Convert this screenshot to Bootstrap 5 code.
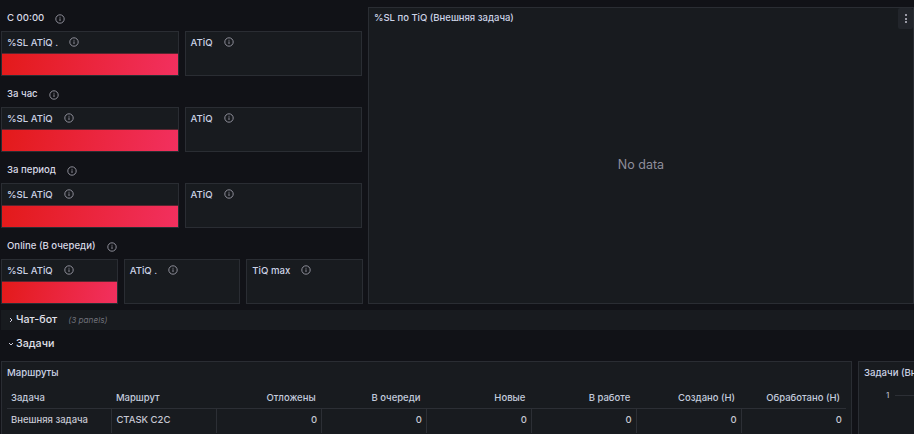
<!DOCTYPE html>
<html lang="ru"><head><meta charset="utf-8"><title>Dashboard</title>
<link href="https://cdn.jsdelivr.net/npm/bootstrap@5.3.0/dist/css/bootstrap.min.css" rel="stylesheet">
<style>
html,body{height:434px;overflow:hidden;background:#111217}
body{font-family:Inter,"Liberation Sans",sans-serif;font-size:9.6px;color:#ccccdc;font-weight:500;width:914px}
.dash{padding:7px 0 0 1px;width:930px}
.top-area{display:flex;gap:5px;height:297px}
.left-col{width:362px;flex:none}
.grp-title{height:24px;padding:3.5px 0 0 6px;color:#d8d9e6;line-height:14px;display:flex;gap:11px}
.tile-row{display:flex;gap:6px;height:45px;margin-bottom:7px;width:361px}
.tile-row.three{width:362px}
.tile{flex:1 1 0;min-width:0;background:#181b1f;border:1px solid #2a2d33;display:flex;flex-direction:column;position:relative}
.tile-head{height:21px;padding:0 5px 1px;line-height:17px;color:#ccd3e6;display:flex;gap:11px;align-items:center;flex:none}
.tile-head svg,.grp-title svg{flex:none}
.bar{flex:1;background:linear-gradient(100deg,#e31a1a,#f2305f);border-top:1px solid #5a2530}
.wide{background:#181b1f;border:1px solid #2a2d33;position:relative;display:flex;align-items:center;justify-content:center;width:546px;flex:none;padding-top:20px}
.wide-head{position:absolute;left:5px;top:3px;line-height:13px;color:#ccd3e6;font-size:9.5px}
.nodata{font-size:12.5px;font-weight:400;color:#8e8e9c}
.kebab{position:absolute;right:0;top:0;width:15px;height:21px;background:#22252b;border-radius:2px;display:flex;flex-direction:column;align-items:center;justify-content:center;gap:1.5px}
.kebab i{display:block;width:2px;height:2px;background:#9a9aa5}
.band{height:20px;margin-top:6px;background:#181b1f;display:flex;align-items:center;padding-left:7px;gap:2px;font-size:10.7px;color:#e0e1ea;width:913px}
.band2{background:none;height:20px;margin-top:4px}
.muted-note{font-size:8.2px;font-style:italic;color:#6e7079;margin-left:9px;font-weight:400}
.bottom{display:flex;gap:6px;margin-top:7px}
.routes{width:851px;height:80px;flex:none;background:#181b1f;border:1px solid #2a2d33;padding:3px 5px 0;overflow:hidden}
.routes-title,.tasks-title{line-height:15px;color:#ccd3e6}
.routes table{table-layout:fixed;width:839px;margin:11px 0 0;--bs-table-bg:transparent;--bs-table-color:#ccccdc;font-size:9.5px;border-color:#2a2d33}
.routes th{font-weight:500;color:#c3cbdd;padding:0 6px 3px 4px;height:17px;line-height:14px;border-bottom:1px solid #2c2f35;background:transparent}
.routes td{padding:4px 4px 0 4px;height:24px;line-height:14px;border:0;border-right:1px solid #2c2f35;color:#c6c7d2;background:transparent}
.routes td:last-child{border-right:0}
.tasks{width:70px;flex:none;height:80px;background:#181b1f;border:1px solid #2a2d33;padding:3px 5px;overflow:hidden;white-space:nowrap}
.tick{display:flex;align-items:center;gap:6px;margin:9px 0 0 22px;color:#b5b6c0;font-size:8px}
.tick i{display:block;height:1px;width:40px;background:#2c2f35}
</style></head><body>
<svg width="0" height="0" class="position-absolute"><defs><symbol id="inf" viewBox="0 0 10 10"><circle cx="5" cy="5" r="4.2" fill="none" stroke="#9a9aa5" stroke-width=".9"/><path d="M5 4.4v2.6M5 2.8v.9" stroke="#9a9aa5" stroke-width=".9"/></symbol></defs></svg>
<div class="dash">
 <div class="top-area">
  <div class="left-col">
   <div class="grp-title"><span>С 00:00</span><svg width="10" height="14"><use href="#inf" width="10" height="10" y="3"/></svg></div>
   <div class="tile-row"><div class="tile"><div class="tile-head"><span>%SL ATiQ .</span><svg width="10" height="10"><use href="#inf"/></svg></div><div class="bar"></div></div><div class="tile"><div class="tile-head"><span>ATiQ</span><svg width="10" height="10"><use href="#inf"/></svg></div></div></div>
   <div class="grp-title"><span>За час</span><svg width="10" height="14"><use href="#inf" width="10" height="10" y="3"/></svg></div>
   <div class="tile-row"><div class="tile"><div class="tile-head"><span>%SL ATiQ</span><svg width="10" height="10"><use href="#inf"/></svg></div><div class="bar"></div></div><div class="tile"><div class="tile-head"><span>ATiQ</span><svg width="10" height="10"><use href="#inf"/></svg></div></div></div>
   <div class="grp-title"><span>За период</span><svg width="10" height="14"><use href="#inf" width="10" height="10" y="3"/></svg></div>
   <div class="tile-row"><div class="tile"><div class="tile-head"><span>%SL ATiQ</span><svg width="10" height="10"><use href="#inf"/></svg></div><div class="bar"></div></div><div class="tile"><div class="tile-head"><span>ATiQ</span><svg width="10" height="10"><use href="#inf"/></svg></div></div></div>
   <div class="grp-title"><span>Online (В очереди)</span><svg width="10" height="14"><use href="#inf" width="10" height="10" y="3"/></svg></div>
   <div class="tile-row three mb-0"><div class="tile"><div class="tile-head"><span>%SL ATiQ</span><svg width="10" height="10"><use href="#inf"/></svg></div><div class="bar"></div></div><div class="tile"><div class="tile-head"><span>ATiQ .</span><svg width="10" height="10"><use href="#inf"/></svg></div></div><div class="tile"><div class="tile-head"><span>TiQ max</span><svg width="10" height="10"><use href="#inf"/></svg></div></div></div>
  </div>
  <div class="wide"><div class="wide-head">%SL по TiQ (Внешняя задача)</div><div class="nodata">No data</div><div class="kebab"><i></i><i></i><i></i></div></div>
 </div>
 <div class="band"><svg width="6" height="8" viewBox="0 0 6 8"><path d="M2 2l2 2-2 2" fill="none" stroke="#ccccdc"/></svg><span>Чат-бот</span><span class="muted-note">(3 panels)</span></div>
 <div class="band band2"><svg width="6" height="8" viewBox="0 0 6 8"><path d="M1 3l2 2 2-2" fill="none" stroke="#ccccdc"/></svg><span>Задачи</span></div>
 <div class="bottom">
  <div class="routes"><div class="routes-title">Маршруты</div>
   <table class="table mb-0"><thead><tr><th>Задача</th><th>Маршрут</th><th class="text-end">Отложены</th><th class="text-end">В очереди</th><th class="text-end">Новые</th><th class="text-end">В работе</th><th class="text-end">Создано (Н)</th><th class="text-end">Обработано (Н)</th></tr></thead>
   <tbody><tr><td>Внешняя задача</td><td>CTASK C2C</td><td class="text-end">0</td><td class="text-end">0</td><td class="text-end">0</td><td class="text-end">0</td><td class="text-end">0</td><td class="text-end">0</td></tr></tbody></table></div>
  <div class="tasks"><div class="tasks-title">Задачи (Внешняя)</div><div class="tick"><span>1</span><i></i></div></div>
 </div>
</div>
</body></html>
